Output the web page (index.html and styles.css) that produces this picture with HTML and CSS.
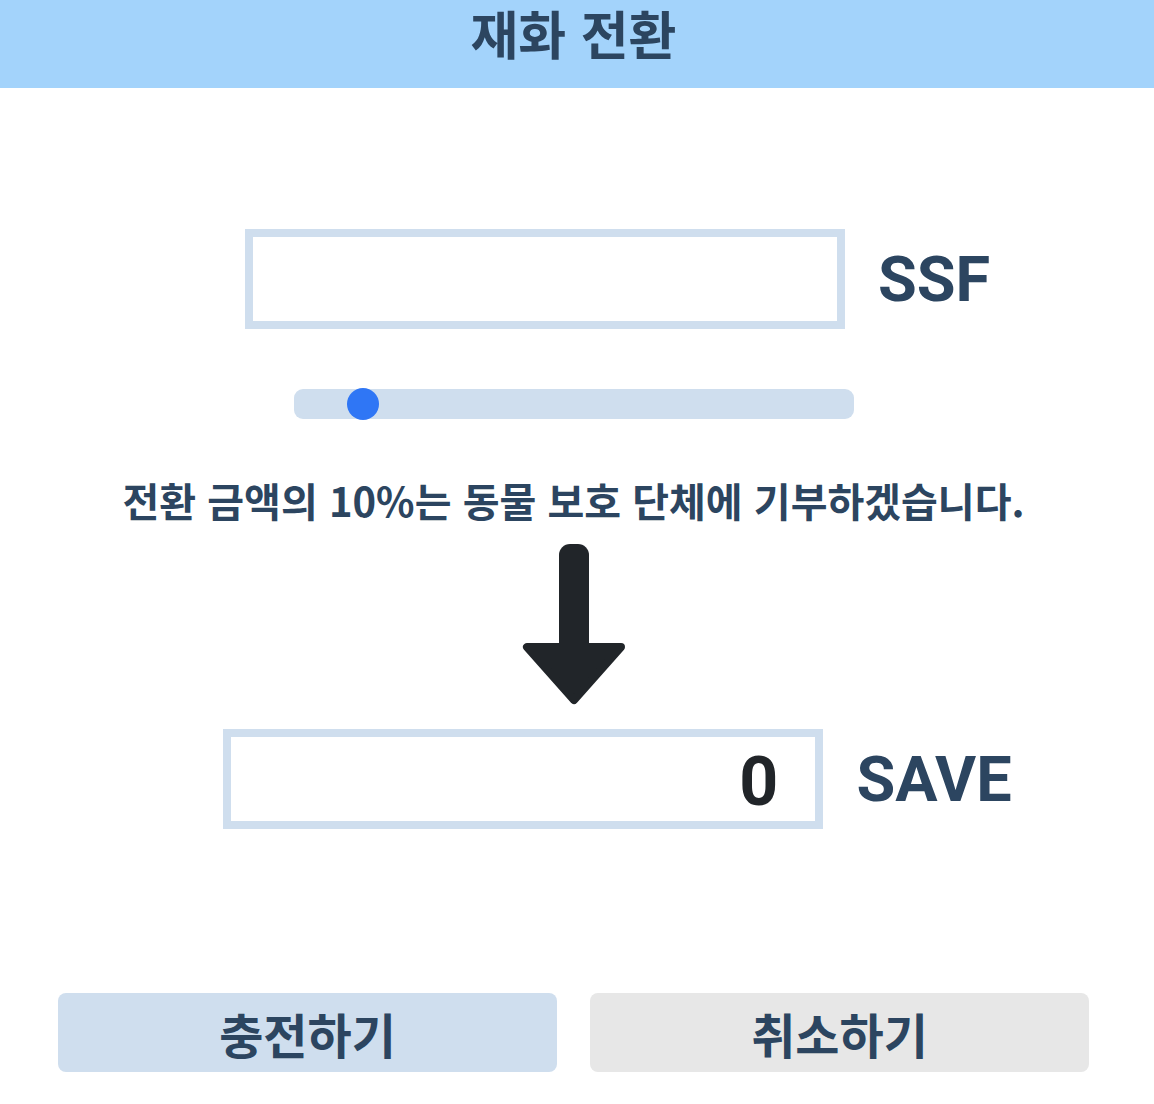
FILE: index.html
```html
<!DOCTYPE html>
<html lang="ko">
<head>
<meta charset="utf-8">
<title>재화 전환</title>
<link rel="stylesheet" href="styles.css">
</head>
<body>
<header class="topbar">
  <h1 class="title">재화 전환</h1>
</header>
<main class="content">
  <div class="field-row row-ssf">
    <div class="field-box"></div>
    <span class="unit">SSF</span>
  </div>
  <div class="slider">
    <span class="thumb"></span>
  </div>
  <p class="notice">전환 금액의 10%는 동물 보호 단체에 기부하겠습니다.</p>
  <svg class="arrow" width="110" height="170" viewBox="0 0 110 170" aria-hidden="true">
    <rect x="40" y="4" width="30" height="112" rx="11" fill="#212529"/>
    <polygon points="8,107 102,107 55,160" fill="#212529" stroke="#212529" stroke-width="8" stroke-linejoin="round"/>
  </svg>
  <div class="field-row row-save">
    <div class="field-box value-box">0</div>
    <span class="unit">SAVE</span>
  </div>
  <div class="actions">
    <button class="btn btn-primary">충전하기</button>
    <button class="btn btn-secondary">취소하기</button>
  </div>
</main>
</body>
</html>
```
FILE: styles.css
```css
* { box-sizing: border-box; }
html, body { margin: 0; padding: 0; background: #ffffff; }
body {
  font-family: "Noto Sans CJK KR", "Noto Sans", sans-serif;
  color: #2c4560;
  width: 1154px;
}
.topbar {
  height: 88px;
  background: #a3d3fb;
  display: flex;
  justify-content: center;
  padding-right: 7px;
}
.title {
  margin: 0;
  font-size: 52px;
  font-weight: 700;
  line-height: 66px;
  color: #2c4560;
}
.content {
  width: 1147px;
  display: flex;
  flex-direction: column;
  align-items: center;
}
.field-row {
  display: flex;
  align-items: center;
  justify-content: center;
  gap: 33px;
  width: 100%;
  padding-left: 88px;
  height: 100px;
}
.row-ssf { margin-top: 141px; }
.row-save { margin-top: 19px; }
.field-box {
  width: 600px;
  height: 100px;
  border: 8px solid #cfdeee;
  background: #fff;
}
.value-box {
  display: flex;
  align-items: center;
  justify-content: flex-end;
  padding-right: 37px;
  padding-top: 6px;
  font-family: Roboto, "Liberation Sans", sans-serif;
  font-weight: 700;
  font-size: 68px;
  color: #212529;
}
.unit {
  font-family: Roboto, "Liberation Sans", sans-serif;
  font-weight: 700;
  font-size: 63px;
  line-height: 1;
  color: #2c4560;
}
.slider {
  position: relative;
  margin-top: 60px;
  width: 560px;
  height: 30px;
  border-radius: 9px;
  background: #cfdeee;
}
.thumb {
  position: absolute;
  left: 53px;
  top: -1px;
  width: 32px;
  height: 32px;
  border-radius: 50%;
  background: #2f76f5;
}
.notice {
  margin: 56px 0 0;
  font-size: 40px;
  font-weight: 700;
  line-height: 50px;
  color: #2c4560;
}
.arrow {
  display: block;
  margin-top: 15px;
}
.actions {
  margin-top: 164px;
  display: flex;
  gap: 33px;
}
.btn {
  width: 499px;
  height: 79px;
  border: none;
  border-radius: 8px;
  font-family: "Noto Sans CJK KR", sans-serif;
  font-size: 48px;
  font-weight: 700;
  color: #2c4560;
  padding: 0;
  line-height: 1;
}
.btn-primary { background: #cfdeee; }
.btn-secondary { background: #e7e7e7; }
```
